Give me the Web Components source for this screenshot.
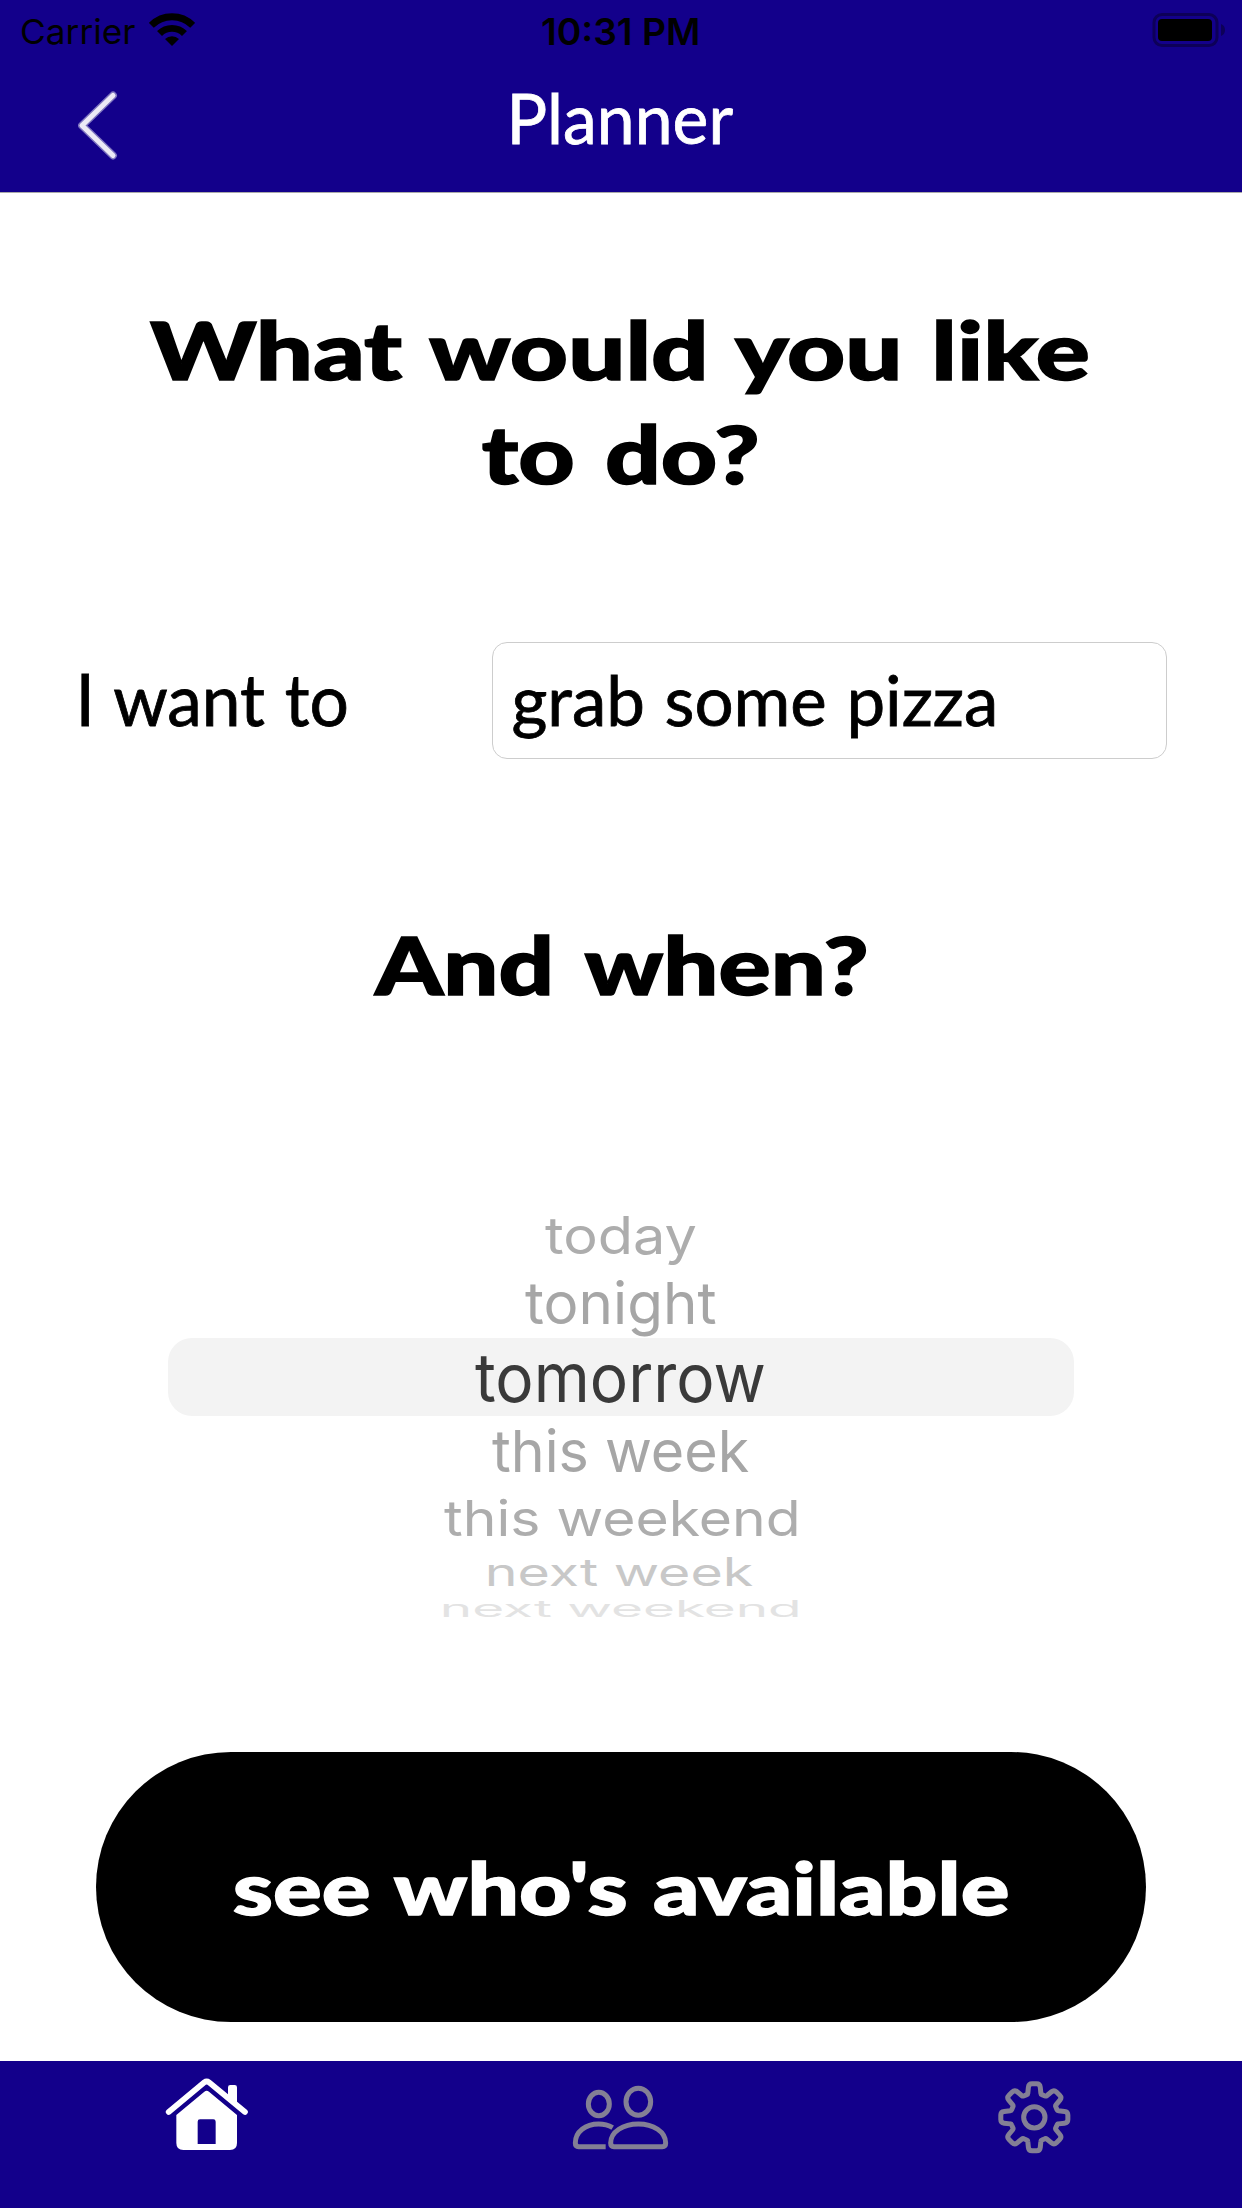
<!DOCTYPE html>
<html lang="en">
<head>
<meta charset="utf-8">
<title>Planner</title>
<style>
  html, body { margin: 0; padding: 0; background: #fff; }
  body { width: 1242px; height: 2208px; overflow: hidden; }
</style>
</head>
<body>
<planner-app></planner-app>
<script>
const GILL = '"Gill Sans", Lato, "Open Sans", sans-serif';
const SYSTEM = 'Inter, "Liberation Sans", sans-serif';
const ctx = document.createElement('canvas').getContext('2d');

/* One line of text scaled so that its ink fills `width` and rises `rise` above
   the baseline, which lies `base` pixels under the top of the element.
   `gap` widens the spaces between words, `stroke` thickens the letters. */
class FitText extends HTMLElement {
  connectedCallback() {
    const n = (k, d) => parseFloat(this.getAttribute(k) ?? d);
    const family = this.getAttribute('face') === 'system' ? SYSTEM : GILL;
    const weight = n('weight', 400), size = n('size', 70), width = n('width', 100);
    const gap = n('gap', 0), stroke = n('stroke', 0);
    const text = this.textContent.trim();
    ctx.font = `${weight} ${size}px ${family}`;
    const m = ctx.measureText(text);
    const ink = m.actualBoundingBoxLeft + m.actualBoundingBoxRight + gap * (text.split(' ').length - 1) + stroke;
    const sx = width / ink, sy = n('rise', 50) / m.actualBoundingBoxAscent;
    const natural = (size - m.fontBoundingBoxAscent - m.fontBoundingBoxDescent) / 2 + m.fontBoundingBoxAscent;
    const dx = (m.actualBoundingBoxLeft + stroke / 2) * sx, dy = n('base', 50) - natural * sy;
    this.attachShadow({ mode: 'open' }).innerHTML = `
      <style>
        :host { display: block; flex: none; width: ${width}px; height: ${n('height', 60)}px; }
        span { display: inline-block; vertical-align: top; white-space: nowrap;
          font: ${weight} ${size}px/${size}px ${family}; word-spacing: ${gap}px;
          -webkit-text-stroke: ${stroke}px currentColor;
          transform-origin: 0 0; transform: translate(${dx}px, ${dy}px) scale(${sx}, ${sy}); }
      </style><span><slot></slot></span>`;
  }
}

class StatusBar extends HTMLElement {
  connectedCallback() {
    this.attachShadow({ mode: 'open' }).innerHTML = `
      <style>
        :host { display: grid; grid-template-columns: 1fr auto 1fr; height: 60px; color: #000;
          padding: 0 16px 0 22px; box-sizing: border-box; }
        .left { display: flex; gap: 14px; }
        .right { display: flex; justify-content: flex-end; }
        .mid { padding-right: 9px; }
        svg { display: block; }
      </style>
      <div class="left">
        <fit-text face="system" size="36" width="113" rise="26.5" base="44">Carrier</fit-text>
        <svg width="46" height="60" viewBox="149 0 46 60">
          <clipPath id="fan"><path d="M172 46 L130 4 V-10 H214 V4Z"/></clipPath>
          <g clip-path="url(#fan)">
            <g fill="none" stroke="#000" stroke-width="6.9">
              <circle cx="172" cy="46" r="29.2"/><circle cx="172" cy="46" r="17.6"/>
            </g>
            <circle cx="172" cy="46" r="9.8"/>
          </g>
        </svg>
      </div>
      <fit-text class="mid" face="system" weight="590" size="36" width="156" rise="26.3" base="44.5">10:31 PM</fit-text>
      <div class="right">
        <svg width="74" height="60" viewBox="1153 0 74 60">
          <rect x="1155" y="14.5" width="63" height="31" rx="8" fill="none" stroke="#0d0058" stroke-width="3"/>
          <rect x="1159" y="19" width="54" height="22" rx="4"/>
          <path d="M1222 24 Q1226 25.5 1226 30 T1222 36Z" fill="#0d0058"/>
        </svg>
      </div>`;
  }
}

class NavBar extends HTMLElement {
  connectedCallback() {
    this.attachShadow({ mode: 'open' }).innerHTML = `
      <style>
        :host { display: grid; grid-template-columns: 434px auto 1fr; height: 132px; color: #fff; padding-left: 78px; }
        svg { display: block; }
      </style>
      <svg width="42" height="132" viewBox="78 60 42 132">
        <g fill="none" stroke="#fff" stroke-linecap="round" stroke-linejoin="round">
          <path d="M113 95.500 L82 125.500 L113 155.500" stroke-width="7.8" opacity=".45"/>
          <path d="M113 95.500 L82 125.500 L113 155.500" stroke-width="5" opacity=".85"/>
        </g>
      </svg>
      <slot></slot>`;
  }
}

class TextBox extends HTMLElement {
  connectedCallback() {
    this.attachShadow({ mode: 'open' }).innerHTML = `
      <style>
        :host { display: block; box-sizing: border-box; width: 675px; height: 117px; padding-left: 20px;
          border: 1px solid #cdcdcd; border-radius: 15px; background: #fff; }
      </style><slot></slot>`;
  }
}

class WheelPicker extends HTMLElement {
  connectedCallback() {
    this.attachShadow({ mode: 'open' }).innerHTML = `
      <style>
        :host { display: flex; flex-direction: column; align-items: center; }
        ::slotted(*) { color: #a6a6a6; padding-right: 1px; }
        ::slotted(.far) { color: #adadad; }
        ::slotted(.farther) { color: #c8c8c8; padding-right: 0; }
        ::slotted(.edge) { color: #e3e3e3; padding-right: 0; }
        .band { display: flex; justify-content: center; width: 906px; height: 78px;
          border-radius: 24px; background: #f3f3f3; }
        .band ::slotted(*) { color: #3a3a3a; padding-right: 3px; }
      </style>
      <slot name="before"></slot>
      <div class="band"><slot name="selected"></slot></div>
      <slot></slot>`;
  }
}

class PillButton extends HTMLElement {
  connectedCallback() {
    this.attachShadow({ mode: 'open' }).innerHTML = `
      <style>
        :host { display: flex; justify-content: center; width: 1050px; height: 270px;
          border-radius: 135px; background: #000; color: #fff; }
      </style><slot></slot>`;
  }
}

class TabBar extends HTMLElement {
  gear() {
    const pts = [];
    for (let k = 0; k < 8; k++) {
      for (const [r, a] of [[72, -16], [102, -9.5], [102, 9.5], [72, 16]]) {
        const t = (k * 45 + a - 90) * Math.PI / 180;
        pts.push([163 + r * Math.cos(t), 172 + r * Math.sin(t)]);
      }
    }
    /* outer corners are rounded, root corners stay sharp */
    const mix = (p, q, d) => {
      const l = Math.hypot(q[0] - p[0], q[1] - p[1]);
      return [p[0] + (q[0] - p[0]) * d / l, p[1] + (q[1] - p[1]) * d / l];
    };
    let d = '';
    pts.forEach((p, i) => {
      const prev = pts[(i + 31) % 32], next = pts[(i + 1) % 32];
      const c = i % 4 === 1 || i % 4 === 2 ? 10 : 3;
      const a = mix(p, prev, c), b = mix(p, next, c);
      d += `${i ? 'L' : 'M'}${a.map(v => v.toFixed(1))} Q${p.map(v => v.toFixed(1))} ${b.map(v => v.toFixed(1))} `;
    });
    return d + 'Z';
  }
  connectedCallback() {
    this.attachShadow({ mode: 'open' }).innerHTML = `
      <style>
        :host { display: grid; grid-template-columns: repeat(3, 414px); justify-items: center;
          height: 147px; background: #13008b; }
        svg { display: block; }
        .off { fill: none; stroke: #837f95; stroke-width: 15; }
      </style>
      <svg width="120" height="120" viewBox="-9 33 360 360">
        <path d="M234 143 V112 Q234 105 241 105 H254 Q261 105 261 112 V166Z" fill="#fff"/>
        <path d="M56 186 L163 97 Q170 92 177 97 L285 186" fill="none" stroke="#fff" stroke-width="17" stroke-linecap="round"/>
        <path fill-rule="evenodd" fill="#fff" d="M79 195 L163 125 Q170 120 177 125 L261 195 V279 Q261 300 240 300 H100 Q79 300 79 279Z
          M143 282 H197 V215 Q197 208 190 208 H150 Q143 208 143 215Z"/>
      </svg>
      <svg class="off" width="120" height="120" viewBox="3 3 360 360">
        <ellipse cx="116.500" cy="132" rx="31.500" ry="35"/>
        <ellipse cx="235" cy="125" rx="37" ry="40.500"/>
        <path d="M158 203 C146 196 132 192 116 192 C77 192 46 215 46 249 Q46 260 56 260 H137"/>
        <path d="M152 249 C152 215 190 192 235 192 S317 215 317 249 Q317 260 307 260 H162 Q152 260 152 249Z"/>
      </svg>
      <svg class="off" width="110" height="120" viewBox="0 3 330 360">
        <path d="${this.gear()}" stroke-linejoin="round"/>
        <circle cx="163" cy="172" r="32"/>
      </svg>`;
  }
}

class PlannerApp extends HTMLElement {
  connectedCallback() {
    this.attachShadow({ mode: 'open' }).innerHTML = `
      <style>
        :host { display: flex; flex-direction: column; width: 1242px; height: 2208px; background: #fff; color: #000; }
        header { background: #13008b; border-bottom: 1px solid #a9a9a9; }
        main { flex: 1; display: flex; flex-direction: column; align-items: center; }
        .what { display: flex; flex-direction: column; align-items: center; padding-top: 107px; }
        .second { padding-right: 3px; }
        .row { display: flex; align-self: stretch; justify-content: space-between; padding: 0 75px 0 81px; margin-top: 134px; }
        .when { margin-top: 161px; padding-right: 1px; }
        wheel-picker { margin-top: 190px; }
        pill-button { margin-top: 112px; }
      </style>
      <header>
        <status-bar></status-bar>
        <nav-bar><fit-text size="70" stroke="0.8" width="221" rise="51.500" base="84">Planner</fit-text></nav-bar>
      </header>
      <main>
        <div class="what">
          <fit-text weight="900" size="84" gap="4" stroke="1.5" width="944" rise="60.500" base="80" height="104">What would you like</fit-text>
          <fit-text class="second" weight="900" size="84" gap="6" stroke="1.5" width="275" rise="60.500" base="80" height="104">to do?</fit-text>
        </div>
        <div class="row">
          <fit-text size="70" gap="2" stroke="0.8" width="267" rise="51.500" base="84" height="117">I want to</fit-text>
          <text-box><fit-text size="70" gap="2" stroke="0.8" width="482" rise="51" base="83">grab some pizza</fit-text></text-box>
        </div>
        <fit-text class="when" weight="900" size="84" gap="8" stroke="1.5" width="495" rise="60.500" base="75" height="90">And when?</fit-text>
        <wheel-picker>
          <fit-text slot="before" class="far" face="system" size="66" width="151" rise="37.500" base="54" height="70">today</fit-text>
          <fit-text slot="before" face="system" size="66" width="191" rise="44" base="54" height="68">tonight</fit-text>
          <fit-text slot="selected" face="system" size="66" width="289" rise="46" base="64">tomorrow</fit-text>
          <fit-text face="system" size="66" width="257" rise="44" base="56" height="64">this week</fit-text>
          <fit-text class="far" face="system" size="66" width="353" rise="37.700" base="56" height="60">this weekend</fit-text>
          <fit-text class="farther" face="system" size="66" width="264" rise="28.300" base="45.500" height="50">next week</fit-text>
          <fit-text class="edge" face="system" size="66" width="354" rise="17" base="27" height="50">next weekend</fit-text>
        </wheel-picker>
        <pill-button><fit-text weight="900" size="76" gap="3" stroke="1.4" width="777" rise="54.500" base="163">see who's available</fit-text></pill-button>
      </main>
      <tab-bar></tab-bar>`;
  }
}

customElements.define('fit-text', FitText);
customElements.define('status-bar', StatusBar);
customElements.define('nav-bar', NavBar);
customElements.define('text-box', TextBox);
customElements.define('wheel-picker', WheelPicker);
customElements.define('pill-button', PillButton);
customElements.define('tab-bar', TabBar);
customElements.define('planner-app', PlannerApp);
</script>
</body>
</html>
